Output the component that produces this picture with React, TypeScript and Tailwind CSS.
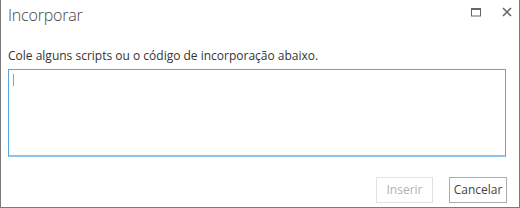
import React from "react";

export default function App() {
  return (
    <div
      className="w-[520px] h-[208px] bg-white border-l border-r border-b border-[#7a7a7a] flex flex-col"
      style={{ fontFamily: '"Open Sans", "Liberation Sans", sans-serif' }}
    >
      <div className="flex items-start h-[40px]">
        <div className="pl-[7px] pt-[4px] text-[16px] font-light text-[#444] leading-[23px] tracking-[-0.2px]">
          Incorporar
        </div>
        <div className="ml-auto flex items-center gap-[21px] pt-[7px] pr-[7px]">
          <svg width="10" height="9" viewBox="0 0 10 9">
            <rect x="0.5" y="0.5" width="9" height="7.5" fill="none" stroke="#666" strokeWidth="1" />
            <rect x="0" y="0" width="10" height="2" fill="#666" />
          </svg>
          <svg width="10" height="10" viewBox="0 0 10 10">
            <path d="M1 1 L9 9 M9 1 L1 9" stroke="#666" strokeWidth="1.6" />
          </svg>
        </div>
      </div>
      <div className="pl-[7px] text-[12px] text-[#333] leading-[18px] mt-[7px]">
        Cole alguns scripts ou o código de incorporação abaixo.
      </div>
      <div className="ml-[7px] mt-[4px] w-[498px] h-[88px] border border-b-2 border-[#5aa6e0] border-b-[#8fc1ea] relative">
        <div className="absolute left-[4px] top-[4px] w-px h-[12px] bg-[#999]" />
      </div>
      <div className="flex justify-end gap-[16px] pr-[12px] mt-[20px]">
        <div className="w-[57px] h-[26px] border border-[#e1e1e1] text-[#b1b1b1] text-[12px] flex items-center justify-center">
          Inserir
        </div>
        <div className="w-[58px] h-[26px] border border-[#ababab] text-[#444] text-[12px] flex items-center justify-center">
          Cancelar
        </div>
      </div>
    </div>
  );
}
